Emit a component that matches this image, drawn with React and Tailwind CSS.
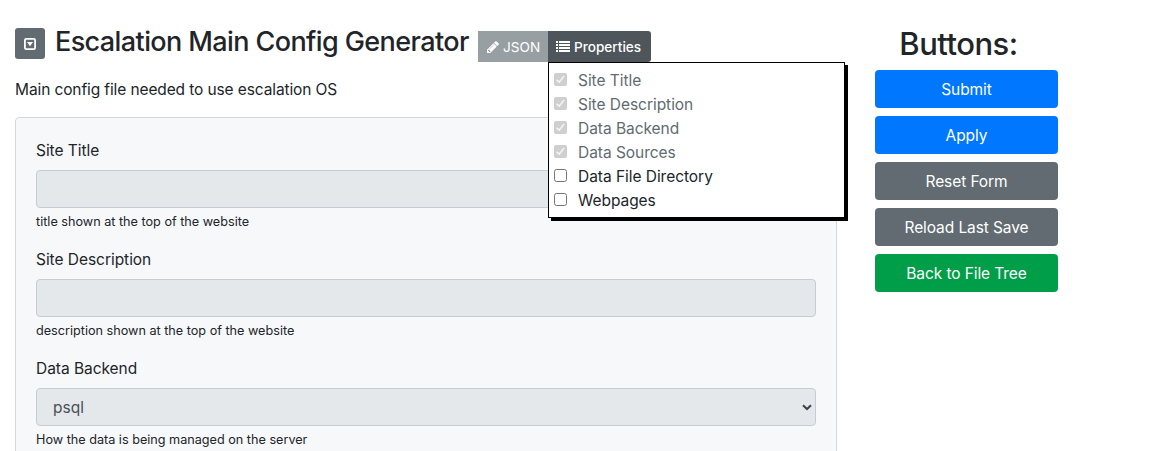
import React from "react";

const FIELDS = [
  { label: "Site Title", help: "title shown at the top of the website" },
  { label: "Site Description", help: "description shown at the top of the website" },
  { label: "Data Backend", help: "How the data is being managed on the server", value: "psql" },
];

const PROPERTIES = [
  { label: "Site Title", locked: true },
  { label: "Site Description", locked: true },
  { label: "Data Backend", locked: true },
  { label: "Data Sources", locked: true },
  { label: "Data File Directory" },
  { label: "Webpages" },
];

const ACTIONS = [
  { label: "Submit", color: "bg-[#0077ff]" },
  { label: "Apply", color: "bg-[#0077ff]" },
  { label: "Reset Form", color: "bg-[#616b71]" },
  { label: "Reload Last Save", color: "bg-[#616b71]" },
  { label: "Back to File Tree", color: "bg-[#009e48]" },
];

function CaretSquareIcon() {
  return (
    <svg width="12" height="12" viewBox="0 0 12 12" fill="none">
      <rect x="0.9" y="0.9" width="10.2" height="10.2" rx="1.4" stroke="white" strokeWidth="1.8" />
      <path d="M3 4h6L6 8.3z" fill="white" />
    </svg>
  );
}

function PencilIcon() {
  return (
    <svg width="12" height="14" viewBox="0 0 1536 1792" fill="white">
      <path d="M363 1536l91-91-235-235-91 91v107h128v128h107zm523-928q0-22-22-22-10 0-17 7l-542 542q-7 7-7 17 0 22 22 22 10 0 17-7l542-542q7-7 7-17zm-54-192l416 416-832 832h-416v-416zm683 96q0 53-37 90l-166 166-416-416 166-165q36-38 90-38 53 0 91 38l235 234q37 39 37 91z" />
    </svg>
  );
}

function ListIcon() {
  return (
    <svg width="14" height="14" viewBox="0 0 14 14" fill="white">
      {[1, 4, 7, 10].map((y) => (
        <g key={y}>
          <rect x="0" y={y} width="2" height="2" />
          <rect x="3" y={y} width="11" height="2" />
        </g>
      ))}
    </svg>
  );
}

function CheckBox({ locked }) {
  return locked ? (
    <span className="flex size-[13px] shrink-0 items-center justify-center rounded-[2px] bg-[#cfcfcf]">
      <svg width="11" height="11" viewBox="0 0 11 11" fill="none">
        <path d="M1.8 5.8L4.2 8.2 9 2" stroke="#f2f2f2" strokeWidth="1.8" />
      </svg>
    </span>
  ) : (
    <span className="block size-[13px] shrink-0 rounded-[2.5px] border border-[#767676] bg-white" />
  );
}

function PropertiesMenu() {
  return (
    <div className="absolute top-[31px] left-[70px] z-10 h-[156px] w-[297px] border border-black bg-white pt-[5px] pl-[5px] shadow-[3px_3px_0_0_#000]">
      {PROPERTIES.map((p) => (
        <div key={p.label} className="flex h-6 items-start">
          <div className="pt-[5px]">
            <CheckBox locked={p.locked} />
          </div>
          <span
            className={
              "ml-[11px] pt-px text-[15.5px] leading-6 tracking-[-0.04px] whitespace-nowrap " +
              (p.locked ? "text-[#616b71]" : "text-[#212529]")
            }
          >
            {p.label}
          </span>
        </div>
      ))}
    </div>
  );
}

function Field({ label, help, value }) {
  return (
    <div className="mb-4 h-[93px]">
      <div className="h-8 pt-px text-[15.5px] leading-6 tracking-[-0.04px]">{label}</div>
      <div className="flex h-[38px] items-center justify-between rounded-[4px] border border-[#c4cdd3] bg-[#e4e8eb] pr-[3px] pl-4 text-[#495057]">
        {value && <span className="pt-[2px] text-[15.5px] leading-6">{value}</span>}
        {value && (
          <svg width="10" height="7" viewBox="0 0 10 7" fill="none">
            <path d="M1 1.2L5 5 9 1.2" stroke="#3b4347" strokeWidth="2" />
          </svg>
        )}
      </div>
      <div className="mt-1 text-[12.65px] leading-5 whitespace-nowrap">{help}</div>
    </div>
  );
}

export default function App() {
  return (
    <div className="flex h-[451px] w-[1162px] overflow-hidden bg-white font-['Inter',sans-serif] text-[#212529]">
      <main className="ml-[15px] w-[822px] pt-[24px]">
        <div className="flex h-[38px] items-start">
          <button className="mt-1 flex h-[31px] w-[30px] items-center justify-center rounded-[3px] bg-[#616b71]">
            <CaretSquareIcon />
          </button>
          <h1 className="mt-px ml-[10px] w-[423px] text-[27px] leading-[34px] font-medium tracking-[-0.6px] whitespace-nowrap">
            Escalation Main Config Generator
          </h1>
          <div className="relative mt-[7px] flex h-[31px] text-[13.6px] leading-[21px] font-medium text-white">
            <button className="flex w-[70px] items-center gap-1 bg-[#979fa2] pl-[9px]">
              <PencilIcon />
              <span className="pt-[2px] font-normal">JSON</span>
            </button>
            <button className="flex w-[103px] items-center gap-1 rounded-r-[3px] bg-[#4e555b] pl-2">
              <ListIcon />
              <span className="pt-[2px]">Properties</span>
            </button>
            <div className="font-normal">
              <PropertiesMenu />
            </div>
          </div>
        </div>
        <p className="mt-4 text-[15.5px] leading-6 tracking-[-0.11px]">
          Main config file needed to use escalation OS
        </p>
        <section className="mt-[15px] h-[400px] rounded-[4px] border border-[#d5d8da] bg-[#f7f8fa] px-5 pt-5">
          {FIELDS.map((f) => (
            <Field key={f.label} {...f} />
          ))}
        </section>
      </main>
      <aside className="ml-[38px] w-[183px] pt-[24px]">
        <h2 className="h-[46px] pt-px pr-[16px] text-center text-[31px] leading-[38px] font-medium tracking-[-0.5px]">
          Buttons:
        </h2>
        <div className="flex flex-col gap-2">
          {ACTIONS.map((a) => (
            <button
              key={a.label}
              className={"h-[38px] rounded-[4px] pt-[2px] text-[15.5px] leading-6 tracking-[-0.09px] text-white " + a.color}
            >
              {a.label}
            </button>
          ))}
        </div>
      </aside>
    </div>
  );
}
